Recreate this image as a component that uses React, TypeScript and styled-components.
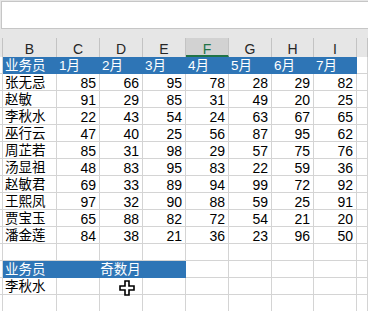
import React from 'react';
import styled, { createGlobalStyle } from 'styled-components';

const GlobalStyle = createGlobalStyle`
  html, body { margin: 0; padding: 0; background: #ffffff; }
  body { font-family: "Liberation Sans", "Noto Sans CJK SC", sans-serif; }
`;

const COLS = '3px 54px 43px 43px 43px 43px 43px 42px 43px 1fr';
const GRID = '#d4d4d4';
const BLUE = '#2e75b6';

const Window = styled.div`
  position: relative;
  width: 368px;
  height: 311px;
  overflow: hidden;
  background: #e6e6e6;
  display: flex;
  flex-direction: column;
`;

const FormulaBar = styled.div`
  margin: 1px 0 0 1px;
  height: 28px;
  box-sizing: border-box;
  border: 1px solid #c6c6c6;
  border-right: none;
  background: #ffffff;
  flex: none;
`;

const Strip = styled.div`
  height: 9px;
  flex: none;
`;

const HeaderBar = styled.div`
  display: grid;
  grid-template-columns: ${COLS};
  height: 19px;
  flex: none;
`;

const ColHead = styled.div<{ $active?: boolean }>`
  box-sizing: border-box;
  height: 19px;
  padding-top: 3px;
  border-right: 1px solid #c3c3c3;
  border-bottom: ${(p) => (p.$active ? '2px solid #217346' : 'none')};
  background: ${(p) => (p.$active ? '#d2d2d2' : 'transparent')};
  color: ${(p) => (p.$active ? '#217346' : '#262626')};
  font-family: "Liberation Sans", sans-serif;
  font-size: 14px;
  line-height: 16px;
  text-align: center;
`;

const Sheet = styled.div`
  display: grid;
  grid-template-columns: ${COLS};
  grid-auto-rows: 17px;
  background: #ffffff;
  flex: 1;
`;

type Kind = 'blank' | 'text' | 'num' | 'head';

const Cell = styled.div<{ $kind?: Kind; $span?: number; $center?: boolean }>`
  box-sizing: border-box;
  grid-column: ${(p) => (p.$span ? `span ${p.$span}` : 'auto')};
  border-right: 1px solid ${(p) => (p.$kind === 'head' ? BLUE : GRID)};
  border-bottom: 1px solid ${(p) => (p.$kind === 'head' ? BLUE : GRID)};
  background: ${(p) => (p.$kind === 'head' ? BLUE : '#ffffff')};
  color: ${(p) => (p.$kind === 'head' ? '#ffffff' : '#000000')};
  font-family: ${(p) =>
    p.$kind === 'num'
      ? '"Liberation Sans", sans-serif'
      : '"Liberation Sans", "Noto Sans CJK SC", sans-serif'};
  font-size: ${(p) => (p.$kind === 'num' ? '14px' : '13.5px')};
  line-height: 18px;
  padding: 0 3px 0 2px;
  text-align: ${(p) => (p.$center ? 'center' : p.$kind === 'num' ? 'right' : 'left')};
  white-space: nowrap;
`;

const Gutter = styled.div`
  box-sizing: border-box;
  border-right: 1px solid ${GRID};
  border-bottom: 1px solid ${GRID};
  background: #ffffff;
`;

const Pointer = styled.svg`
  position: absolute;
  left: 119px;
  top: 280px;
  width: 16px;
  height: 16px;
`;

const letters = ['B', 'C', 'D', 'E', 'F', 'G', 'H', 'I'];
const months = ['1月', '2月', '3月', '4月', '5月', '6月', '7月'];

const data: [string, number[]][] = [
  ['张无忌', [85, 66, 95, 78, 28, 29, 82]],
  ['赵敏', [91, 29, 85, 31, 49, 20, 25]],
  ['李秋水', [22, 43, 54, 24, 63, 67, 65]],
  ['巫行云', [47, 40, 25, 56, 87, 95, 62]],
  ['周芷若', [85, 31, 98, 29, 57, 75, 76]],
  ['汤显祖', [48, 83, 95, 83, 22, 59, 36]],
  ['赵敏君', [69, 33, 89, 94, 99, 72, 92]],
  ['王熙凤', [97, 32, 90, 88, 59, 25, 91]],
  ['贾宝玉', [65, 88, 82, 72, 54, 21, 20]],
  ['潘金莲', [84, 38, 21, 36, 23, 96, 50]],
];

const BlankRow: React.FC = () => (
  <>
    <Gutter />
    {Array.from({ length: 9 }).map((_, i) => (
      <Cell key={i} $kind="blank" />
    ))}
  </>
);

export default function App() {
  return (
    <>
      <GlobalStyle />
      <Window>
        <FormulaBar />
        <Strip />
        <HeaderBar>
          <ColHead />
          {letters.map((l) => (
            <ColHead key={l} $active={l === 'F'}>
              {l}
            </ColHead>
          ))}
          <ColHead />
        </HeaderBar>
        <Sheet>
          <Gutter />
          <Cell $kind="head">业务员</Cell>
          {months.map((m) => (
            <Cell key={m} $kind="head">
              {m}
            </Cell>
          ))}
          <Cell $kind="blank" />

          {data.map(([name, vals]) => (
            <React.Fragment key={name}>
              <Gutter />
              <Cell $kind="text">{name}</Cell>
              {vals.map((v, i) => (
                <Cell key={i} $kind="num">
                  {v}
                </Cell>
              ))}
              <Cell $kind="blank" />
            </React.Fragment>
          ))}

          <BlankRow />

          <Gutter />
          <Cell $kind="head">业务员</Cell>
          <Cell $kind="head" $span={3} $center>
            奇数月
          </Cell>
          {Array.from({ length: 5 }).map((_, i) => (
            <Cell key={i} $kind="blank" />
          ))}

          <Gutter />
          <Cell $kind="text">李秋水</Cell>
          {Array.from({ length: 8 }).map((_, i) => (
            <Cell key={i} $kind="blank" />
          ))}

          <BlankRow />
        </Sheet>
        <Pointer viewBox="0 0 16 16">
          <path
            d="M6 1 H10 V6 H15 V10 H10 V15 H6 V10 H1 V6 H6 Z"
            fill="#ffffff"
            stroke="#000000"
            strokeWidth="1.6"
            strokeLinejoin="miter"
          />
        </Pointer>
      </Window>
    </>
  );
}
